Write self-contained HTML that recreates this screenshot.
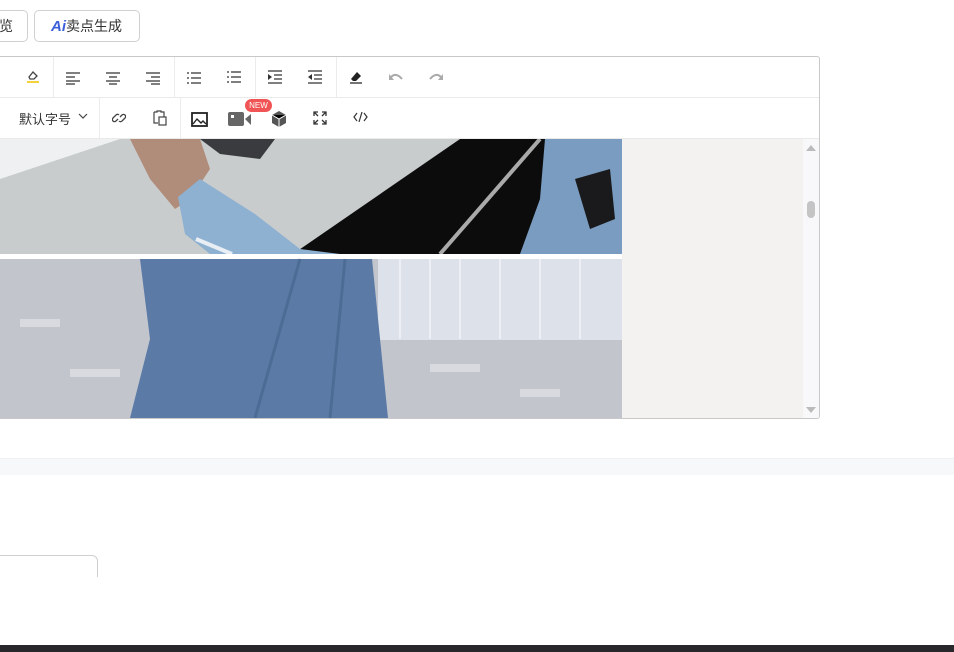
<!DOCTYPE html>
<html><head><meta charset="utf-8"><style>
*{margin:0;padding:0;box-sizing:border-box}
body{width:954px;height:652px;overflow:hidden;background:#fff;position:relative;font-family:"Liberation Sans","Noto Sans CJK SC",sans-serif;color:#333}
.btn{position:absolute;top:10px;height:32px;border:1px solid #d0d0d0;border-radius:5px;font-size:14px;line-height:30px;background:#fff}
.ed{position:absolute;left:-1px;top:56px;width:821px;height:363px;border:1px solid #c8c8c8;border-radius:0 3px 3px 0;overflow:hidden}
.row{position:absolute;left:0;width:100%;height:41px;border-bottom:1px solid #eaeaea}
.sep{position:absolute;top:0;width:1px;height:40px;background:#ececec}
.ic{position:absolute}
</style></head><body>
<div class="btn" style="left:-10px;width:38px;padding-left:8px">览</div>
<div class="btn" style="left:34px;width:106px;padding-left:16px"><b style="color:#3b5fd8;font-style:italic;font-size:15px;font-family:'Liberation Sans',sans-serif">Ai</b>卖点生成</div>

<div class="ed">
 <div class="row" style="top:0">
  <div class="sep" style="left:53px"></div><div class="sep" style="left:174px"></div><div class="sep" style="left:255px"></div><div class="sep" style="left:336px"></div>
  <svg class="ic" style="left:25px;top:12px" width="16" height="16" viewBox="0 0 16 16"><path d="M4 8l4-5 4 4-3 3H5z" fill="none" stroke="#444" stroke-width="1.3"/><rect x="2" y="12" width="12" height="2" fill="#f5d23a"/></svg>
  <svg class="ic" style="left:65px;top:14px" width="16" height="14"><path d="M1 2h14M1 6h9M1 10h14M1 13h9" stroke="#333" stroke-width="1.3"/></svg>
  <svg class="ic" style="left:105px;top:14px" width="16" height="14"><path d="M1 2h14M4 6h8M1 10h14M4 13h8" stroke="#333" stroke-width="1.3"/></svg>
  <svg class="ic" style="left:145px;top:14px" width="16" height="14"><path d="M1 2h14M6 6h9M1 10h14M6 13h9" stroke="#333" stroke-width="1.3"/></svg>
  <svg class="ic" style="left:186px;top:14px" width="16" height="14"><path d="M5 2h10M5 7h10M5 12h10M1 2h2M1 7h2M1 12h2" stroke="#333" stroke-width="1.3"/></svg>
  <svg class="ic" style="left:226px;top:13px" width="16" height="15"><path d="M5 2h10M5 7h10M5 12h10M1 2h2M1 7h2M1 12h2" stroke="#333" stroke-width="1.3"/></svg>
  <svg class="ic" style="left:267px;top:13px" width="16" height="15"><path d="M1 1h14M7 5h8M7 9h8M1 13h14" stroke="#333" stroke-width="1.3"/><path d="M1 4l4 3-4 3z" fill="#333"/></svg>
  <svg class="ic" style="left:307px;top:13px" width="16" height="15"><path d="M1 1h14M7 5h8M7 9h8M1 13h14" stroke="#333" stroke-width="1.3"/><path d="M5 4l-4 3 4 3z" fill="#333"/></svg>
  <svg class="ic" style="left:348px;top:12px" width="16" height="16"><path d="M3 10l6-7 4 4-5 5H5z" fill="#222"/><path d="M2 14h12" stroke="#222" stroke-width="1.3"/></svg>
  <svg class="ic" style="left:388px;top:14px" width="16" height="12"><path d="M3 6q5-5 11 2" fill="none" stroke="#aaa" stroke-width="2"/><path d="M1 3v6h5z" fill="#aaa"/></svg>
  <svg class="ic" style="left:428px;top:14px" width="16" height="12"><path d="M13 6q-5-5-11 2" fill="none" stroke="#aaa" stroke-width="2"/><path d="M15 3v6h-5z" fill="#aaa"/></svg>
 </div>
 <div class="row" style="top:41px">
  <div class="sep" style="left:99px"></div><div class="sep" style="left:180px"></div>
  <div style="position:absolute;left:19px;top:11px;font-size:13px;color:#333">默认字号</div>
  <svg class="ic" style="left:78px;top:15px" width="10" height="8"><path d="M1 1l4 4 4-4" fill="none" stroke="#444" stroke-width="1.2"/></svg>
  <svg class="ic" style="left:112px;top:13px" width="14" height="14"><path d="M6 8l-2 2a2 2 0 01-3-3l3-3a2 2 0 013 0M8 6l2-2a2 2 0 013 3l-3 3a2 2 0 01-3 0" fill="none" stroke="#444" stroke-width="1.3"/></svg>
  <svg class="ic" style="left:152px;top:11px" width="16" height="18"><path d="M2 3h3v-1h4v1h3v5M2 3v11h4" fill="none" stroke="#444" stroke-width="1.2"/><rect x="7" y="8" width="7" height="8" fill="none" stroke="#444" stroke-width="1.2"/></svg>
  <svg class="ic" style="left:191px;top:14px" width="17" height="15"><rect x="1" y="1" width="15" height="13" fill="none" stroke="#222" stroke-width="1.8"/><path d="M2 12l4-5 4 4 2-2 3 3" fill="none" stroke="#222" stroke-width="1.4"/></svg>
  <svg class="ic" style="left:228px;top:13px" width="24" height="16"><rect x="0" y="1" width="16" height="14" rx="2" fill="#666"/><rect x="3" y="4" width="3" height="3" fill="#fff"/><path d="M17 8l6-5v11z" fill="#666"/></svg>
  <div style="position:absolute;left:245px;top:1px;width:27px;height:13px;border-radius:7px;background:#f05454;color:#fff;font-size:8px;line-height:13px;text-align:center">NEW</div>
  <svg class="ic" style="left:271px;top:12px" width="16" height="17"><path d="M8 1l7 4v8l-7 4-7-4V5z" fill="#555"/><path d="M1 5l7 4 7-4M8 9v8" stroke="#fff" stroke-width="1"/></svg>
  <svg class="ic" style="left:313px;top:13px" width="14" height="14"><path d="M1 5V1h4M1 1l4 4M13 5V1H9M13 1L9 5M1 9v4h4M1 13l4-4M13 9v4H9M13 13L9 9" fill="none" stroke="#333" stroke-width="1.3"/></svg>
  <svg class="ic" style="left:353px;top:14px" width="15" height="10"><path d="M4 1L1 5l3 4M11 1l3 4-3 4M9 0L6 10" fill="none" stroke="#333" stroke-width="1.2"/></svg>
 </div>
 <div style="position:absolute;left:0;top:82px;width:821px;height:279px;background:#f3f2f1">
  <svg style="position:absolute;left:0;top:0" width="622" height="279">
   <rect width="622" height="115" fill="#c9cccd"/>
   <polygon points="0,0 120,0 0,40" fill="#eef0f1"/>
   <polygon points="200,0 275,0 260,20 220,15" fill="#3a3b3e"/>
   <polygon points="460,0 545,0 545,115 293,115" fill="#0c0c0d"/>
   <path d="M540 0L440 115" stroke="#aaa" stroke-width="4"/>
   <polygon points="130,0 200,0 210,30 190,60 175,70 150,40" fill="#b08d7a"/>
   <polygon points="178,58 200,40 255,75 300,110 340,115 210,115 185,95" fill="#8eb1d1"/>
   <path d="M196 100L232 115" stroke="#e8eef4" stroke-width="4"/>
   <polygon points="545,0 622,0 622,115 520,115 540,60" fill="#7a9cc0"/>
   <polygon points="575,40 610,30 615,80 590,90" fill="#1a1a1c"/>
   <rect y="115" width="622" height="5" fill="#fff"/>
   <rect y="120" width="622" height="159" fill="#c3c5cd"/>
   <rect x="378" y="120" width="244" height="81" fill="#dde1ea"/>
   <g stroke="#f4f6fb" stroke-width="2" opacity=".7"><path d="M400 120v80M430 120v80M460 120v80M500 120v80M540 120v80M580 120v80"/></g>
   <g fill="#d8dae0"><rect x="20" y="180" width="40" height="8"/><rect x="70" y="230" width="50" height="8"/><rect x="430" y="225" width="50" height="8"/><rect x="520" y="250" width="40" height="8"/></g>
   <polygon points="140,120 372,120 388,279 130,279 150,200" fill="#5b7ba6"/>
   <path d="M300 120L255 279M345 120L330 279" stroke="#4d6c95" stroke-width="3"/>
  </svg>
  <div style="position:absolute;left:803px;top:0;width:17px;height:279px;background:#f8f8fa"></div>
  <svg style="position:absolute;left:805px;top:4px" width="12" height="10"><path d="M1 8l5-6 5 6z" fill="#bbb"/></svg>
  <svg style="position:absolute;left:805px;top:266px" width="12" height="10"><path d="M1 2l5 6 5-6z" fill="#bbb"/></svg>
  <div style="position:absolute;left:807px;top:62px;width:8px;height:17px;border-radius:4px;background:#c4c4c4"></div>
 </div>
</div>
<div style="position:absolute;left:0;top:458px;width:954px;height:17px;background:#f6f8fa;border-top:1px solid #eef0f2"></div>
<div style="position:absolute;left:-10px;top:555px;width:108px;height:30px;border:1px solid #cfcfcf;border-radius:0 6px 0 0"></div>
<div style="position:absolute;left:0;top:577px;width:954px;height:20px;background:#fff"></div>
<div style="position:absolute;left:0;top:645px;width:954px;height:7px;background:#28282c"></div>
</body></html>
